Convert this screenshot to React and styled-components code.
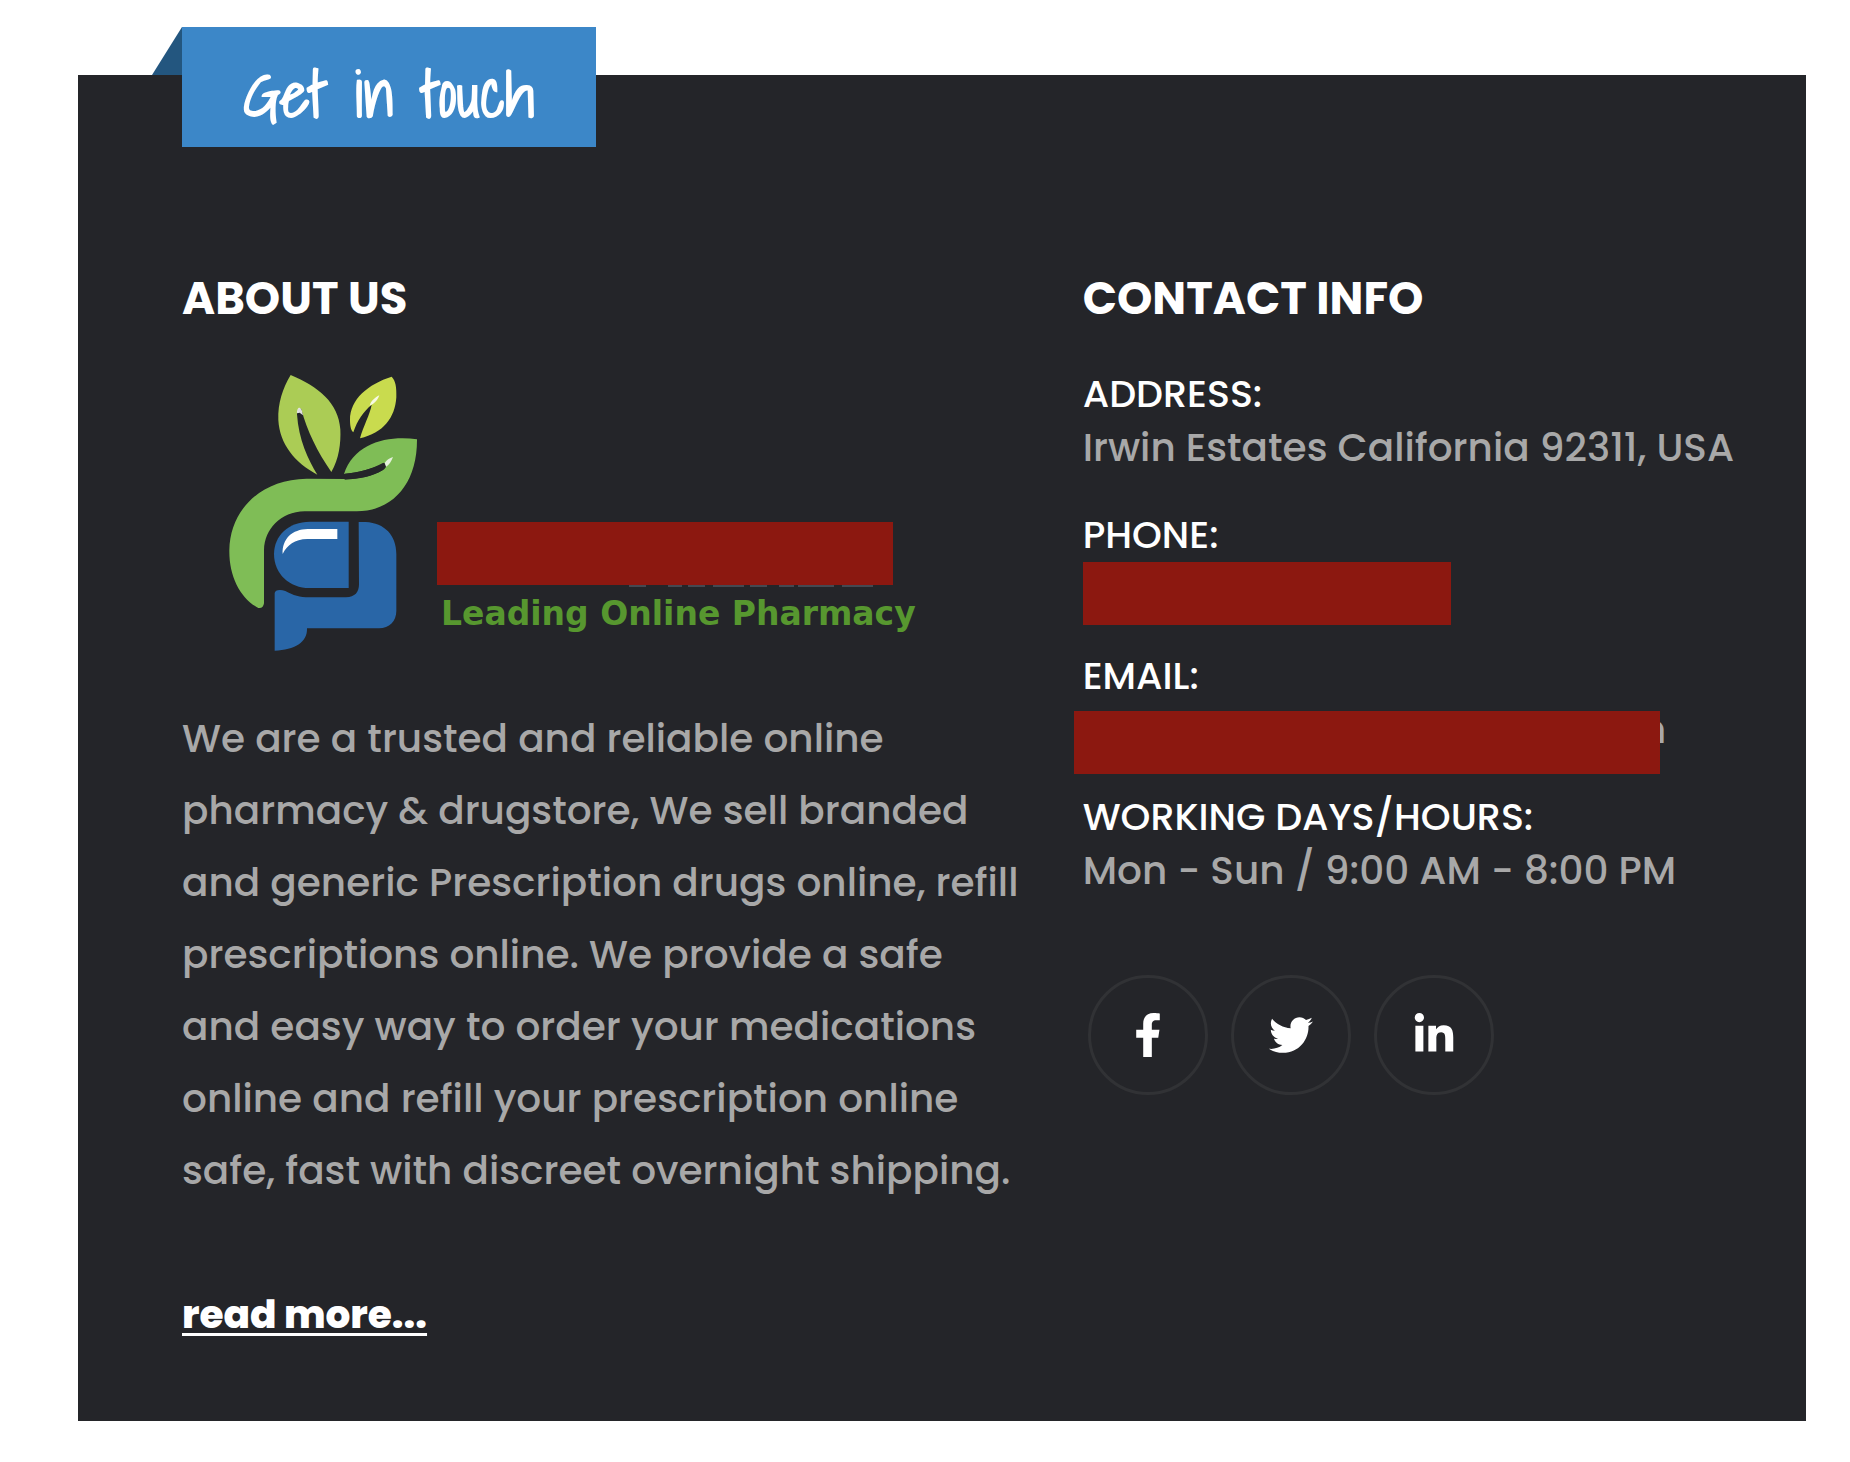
import React from "react";
import styled, { createGlobalStyle } from "styled-components";
import { FaFacebookF, FaTwitter, FaLinkedinIn } from "react-icons/fa";

const GlobalStyle = createGlobalStyle`
    * {
        box-sizing: border-box;
    }
    body {
        margin: 0;
        background: #fff;
        font-family: Poppins, Inter, sans-serif;
    }
    h2, h3, p, ul, dl, dd {
        margin: 0;
        padding: 0;
    }
`

const Page = styled.div`
    padding: 75px 44px 41px 78px;
`

const FooterBox = styled.footer`
    display: flow-root;
    padding: 0 80px 70px 104px;
    background: #242529;
    color: #a8a8a8;
`

const Ribbon = styled.h2`
    position: relative;
    display: flex;
    align-items: center;
    justify-content: center;
    width: 414px;
    height: 120px;
    margin-top: -48px;
    padding-top: 13px;
    background: #3c87c8;
    color: #fff;
    font-family: "Shadows Into Light", "Liberation Sans Narrow", cursive;
    font-size: 63px;
    font-weight: 700;
    white-space: nowrap;
    &::before {
        content: "";
        position: absolute;
        top: 0;
        right: 100%;
        width: 30px;
        height: 48px;
        background: #23567f;
        clip-path: polygon(100% 0, 100% 100%, 0 100%);
    }
`

const Columns = styled.div`
    display: grid;
    grid-template-columns: minmax(0, 7fr) minmax(0, 5fr);
    margin-top: 128px;
`

const Title = styled.h3`
    color: #fff;
    font-size: 45px;
    font-weight: 700;
    line-height: 48px;
    text-transform: uppercase;
`

const LogoRow = styled.div`
    display: flex;
    gap: 19px;
    margin: 51px 0 51px 46px;
    svg {
        flex: none;
    }
`

const LogoText = styled.div`
    display: flex;
    flex-direction: column;
    padding-top: 148px;
    p {
        padding-left: 4px;
        color: #57972f;
        font-family: "DejaVu Sans", Verdana, sans-serif;
        font-size: 33px;
        font-weight: 700;
        line-height: 52px;
        white-space: nowrap;
    }
`

const Redacted = styled.div`
    position: relative;
    flex: none;
    width: ${({ $width }) => $width}px;
    height: 63px;
    background: #8c1810;
`

const About = styled.p`
    font-size: 39px;
    font-weight: 500;
    line-height: 72px;
    white-space: nowrap;
    a {
        color: #fff;
        font-weight: 800;
        text-decoration: underline;
        text-decoration-thickness: 3px;
        text-underline-offset: 5px;
    }
`

const InfoList = styled.dl`
    display: flex;
    flex-direction: column;
    gap: 33px;
    margin-top: 44px;
    font-size: 39px;
    font-weight: 500;
    line-height: 54px;
    white-space: nowrap;
    dt {
        color: #fff;
        font-size: 38px;
        text-transform: uppercase;
    }
    dd {
        height: 54px;
    }
`

const EmailValue = styled.div`
    display: flex;
    margin-left: -9px;
    padding-top: 8px;
    span {
        margin: -8px 0 0 -34px;
    }
    ${Redacted} {
        z-index: 1;
    }
`

const Socials = styled.ul`
    display: flex;
    gap: 23px;
    margin: 77px 0 0 5px;
    list-style: none;
    a {
        display: flex;
        align-items: center;
        justify-content: center;
        width: 120px;
        height: 120px;
        border: 3px solid #313235;
        border-radius: 50%;
        color: #fff;
        font-size: 44px;
    }
`

const Logo = () => (
    <svg width="190" height="278" viewBox="54 42 570 834" aria-hidden="true">
        <path fill="#abcc55" d="M242 45C218 85 203 130 205 180C209 252 254 308 322 344C294 298 266 240 261 163C261 148 268 139 274 148C291 212 322 276 364 336C387 297 393 250 391 208C386 128 324 79 242 45Z" />
        <path fill="#c9db4e" d="M545 50C475 72 420 117 420 180C420 198 423 211 430 217C442 180 461 154 485 134C480 163 460 198 450 235C520 219 555 174 559 112C560 82 557 62 545 50Z" />
        <path fill="#fff" opacity=".85" d="M479 137C482 123 496 112 508 106C503 120 495 130 479 137ZM261 160C260 147 268 135 275 150L279 166L269 158Z" />
        <path fill="#7fbd56" d="M621 238C535 226 434 247 402 342C445 337 485 328 524 309C532 316 528 324 518 331C486 350 449 357 405 357L290 356C150 358 60 452 58 570C57 650 91 714 145 744C155 746 161 739 162 730V570C164 507 211 456 284 454L440 454C552 453 622 367 621 238Z" />
        <path fill="#242529" d="M404 341C445 337 485 328 520 308C532 314 529 322 518 330C486 349 449 357 404 359Z" />
        <path fill="#e5f1dc" d="M524 309C529 300 539 295 549 291C544 304 538 314 528 320Z" />
        <path fill="#2966a7" d="M416 485H300C235 485 193 527 192 581C192 642 239 684 298 684H416Z" />
        <path fill="#2966a7" d="M446 486H467C524 489 559 526 559 582V753C559 783 538 805 507 805H291C293 847 254 870 194 872V700C194 689 211 687 226 693C250 706 269 712 298 712H408C435 711 447 697 447 673Z" />
        <path fill="#fff" d="M218 582C216 536 247 508 293 507H382V537H292C254 538 231 555 218 582Z" />
    </svg>
)

// lower edge of the brand name that shows under the bar
const BrandEdge = () => (
    <svg width="456" height="3" viewBox="0 0 456 3" aria-hidden="true">
        <path stroke="#454951" strokeWidth="2" d="M192 1h17M231 1h14M251 1h17M276 1h31M313 1h17M342 1h15M361 1h36M405 1h31" />
    </svg>
)

const socials = [
    { name: "Facebook", icon: <FaFacebookF /> },
    { name: "Twitter", icon: <FaTwitter /> },
    { name: "LinkedIn", icon: <FaLinkedinIn /> },
]

const App = () => {
    return (
        <>
            <GlobalStyle />
            <Page>
                <FooterBox>
                    <Ribbon>Get in touch</Ribbon>
                    <Columns>
                        <section>
                            <Title>About Us</Title>
                            <LogoRow>
                                <Logo />
                                <LogoText>
                                    <Redacted $width={456} />
                                    <BrandEdge />
                                    <p>Leading Online Pharmacy</p>
                                </LogoText>
                            </LogoRow>
                            <About>
                                We are a trusted and reliable online<br />
                                pharmacy &amp; drugstore, We sell branded<br />
                                and generic Prescription drugs online, refill<br />
                                prescriptions online. We provide a safe<br />
                                and easy way to order your medications<br />
                                online and refill your prescription online<br />
                                safe, fast with discreet overnight shipping.<br />
                                <br />
                                <a href="#about">read more...</a>
                            </About>
                        </section>
                        <section>
                            <Title>Contact Info</Title>
                            <InfoList>
                                <div>
                                    <dt>Address:</dt>
                                    <dd>Irwin Estates California 92311, USA</dd>
                                </div>
                                <div>
                                    <dt>Phone:</dt>
                                    <dd><Redacted $width={368} /></dd>
                                </div>
                                <div>
                                    <dt>Email:</dt>
                                    <dd>
                                        <EmailValue>
                                            <Redacted $width={586} />
                                            <span>m</span>
                                        </EmailValue>
                                    </dd>
                                </div>
                                <div>
                                    <dt>Working Days/Hours:</dt>
                                    <dd>Mon - Sun / 9:00 AM - 8:00 PM</dd>
                                </div>
                            </InfoList>
                            <Socials>
                                {socials.map(({ name, icon }) => (
                                    <li key={name}>
                                        <a href={`#${name.toLowerCase()}`} aria-label={name}>{icon}</a>
                                    </li>
                                ))}
                            </Socials>
                        </section>
                    </Columns>
                </FooterBox>
            </Page>
        </>
    )
}

export default App;
